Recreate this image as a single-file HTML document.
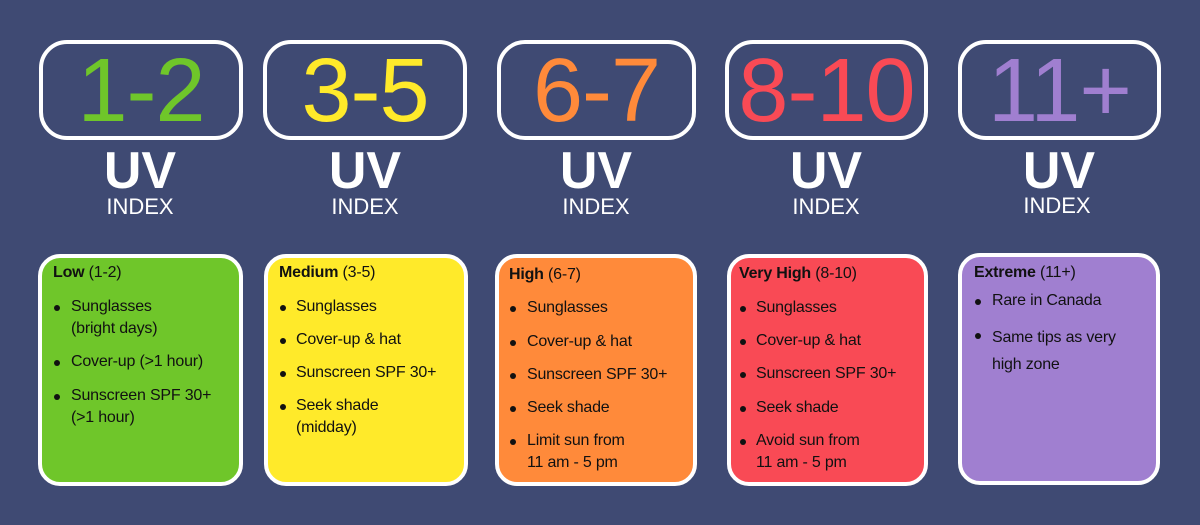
<!DOCTYPE html>
<html><head><meta charset="utf-8"><style>
*{margin:0;padding:0;box-sizing:border-box}
body{width:1200px;height:525px;background:#3f4a73;position:relative;overflow:hidden;font-family:"Liberation Sans",sans-serif}
.top{position:absolute;top:40px;height:100px;border:4px solid #fff;border-radius:28px;text-align:center;font-size:90px;line-height:94px;font-weight:400;letter-spacing:-1px}
.uv{position:absolute;top:144px;width:200px;text-align:center;color:#fff;font-weight:700;font-size:52px;line-height:54px}
.idx{position:absolute;top:195px;width:200px;text-align:center;color:#fff;font-size:22px;line-height:24px}
.card{position:absolute;top:254px;height:232px;border:4px solid #fff;border-radius:22px}
.t{position:absolute;font-size:16px;line-height:22px;color:#111;white-space:nowrap;letter-spacing:-0.2px}
.t b{font-weight:700}
.b{position:absolute;width:6px;height:6px;background:#111;border-radius:50%}
</style></head><body>
<div class="top" style="left:39px;width:204px;color:#6fc62a">1-2</div>
<div class="top" style="left:263px;width:204px;color:#ffea2a">3-5</div>
<div class="top" style="left:497px;width:199px;color:#ff8a3a">6-7</div>
<div class="top" style="left:725px;width:203px;color:#f94a55">8-10</div>
<div class="top" style="left:958px;width:203px;color:#a07fd0">11+</div>

<div class="uv" style="left:40px">UV</div><div class="idx" style="left:40px">INDEX</div>
<div class="uv" style="left:265px">UV</div><div class="idx" style="left:265px">INDEX</div>
<div class="uv" style="left:496px">UV</div><div class="idx" style="left:496px">INDEX</div>
<div class="uv" style="left:726px">UV</div><div class="idx" style="left:726px">INDEX</div>
<div class="uv" style="left:959px">UV</div><div class="idx" style="left:957px;top:194px">INDEX</div>

<div class="card" style="left:38px;width:205px;background:#6fc62a"></div>
<div class="card" style="left:264px;width:204px;background:#ffea2a"></div>
<div class="card" style="left:495px;width:202px;background:#ff8a3a"></div>
<div class="card" style="left:727px;width:201px;background:#f94a55"></div>
<div class="card" style="left:958px;width:202px;background:#a07fd0;top:253px"></div>

<!-- col1 -->
<div class="t" style="left:53px;top:262px"><b>Low</b> (1-2)</div>
<div class="b" style="left:54px;top:305px"></div><div class="t" style="left:71px;top:296px">Sunglasses<br>(bright days)</div>
<div class="b" style="left:54px;top:360px"></div><div class="t" style="left:71px;top:351px">Cover-up (&gt;1 hour)</div>
<div class="b" style="left:54px;top:394px"></div><div class="t" style="left:71px;top:385px">Sunscreen SPF 30+<br>(&gt;1 hour)</div>
<!-- col2 -->
<div class="t" style="left:279px;top:262px"><b>Medium</b> (3-5)</div>
<div class="b" style="left:280px;top:305px"></div><div class="t" style="left:296px;top:296px">Sunglasses</div>
<div class="b" style="left:280px;top:338px"></div><div class="t" style="left:296px;top:329px">Cover-up &amp; hat</div>
<div class="b" style="left:280px;top:371px"></div><div class="t" style="left:296px;top:362px">Sunscreen SPF 30+</div>
<div class="b" style="left:280px;top:404px"></div><div class="t" style="left:296px;top:395px">Seek shade<br>(midday)</div>
<!-- col3 -->
<div class="t" style="left:509px;top:264px"><b>High</b> (6-7)</div>
<div class="b" style="left:510px;top:306px"></div><div class="t" style="left:527px;top:297px">Sunglasses</div>
<div class="b" style="left:510px;top:340px"></div><div class="t" style="left:527px;top:331px">Cover-up &amp; hat</div>
<div class="b" style="left:510px;top:373px"></div><div class="t" style="left:527px;top:364px">Sunscreen SPF 30+</div>
<div class="b" style="left:510px;top:406px"></div><div class="t" style="left:527px;top:397px">Seek shade</div>
<div class="b" style="left:510px;top:439px"></div><div class="t" style="left:527px;top:430px">Limit sun from<br>11 am - 5 pm</div>
<!-- col4 -->
<div class="t" style="left:739px;top:263px"><b>Very High</b> (8-10)</div>
<div class="b" style="left:740px;top:306px"></div><div class="t" style="left:756px;top:297px">Sunglasses</div>
<div class="b" style="left:740px;top:339px"></div><div class="t" style="left:756px;top:330px">Cover-up &amp; hat</div>
<div class="b" style="left:740px;top:372px"></div><div class="t" style="left:756px;top:363px">Sunscreen SPF 30+</div>
<div class="b" style="left:740px;top:406px"></div><div class="t" style="left:756px;top:397px">Seek shade</div>
<div class="b" style="left:740px;top:439px"></div><div class="t" style="left:756px;top:430px">Avoid sun from<br>11 am - 5 pm</div>
<!-- col5 -->
<div class="t" style="left:974px;top:262px"><b>Extreme</b> (11+)</div>
<div class="b" style="left:975px;top:299px"></div><div class="t" style="left:992px;top:290px">Rare in Canada</div>
<div class="b" style="left:975px;top:333px"></div><div class="t" style="left:992px;top:324px;line-height:27px">Same tips as very<br>high zone</div>
</body></html>
